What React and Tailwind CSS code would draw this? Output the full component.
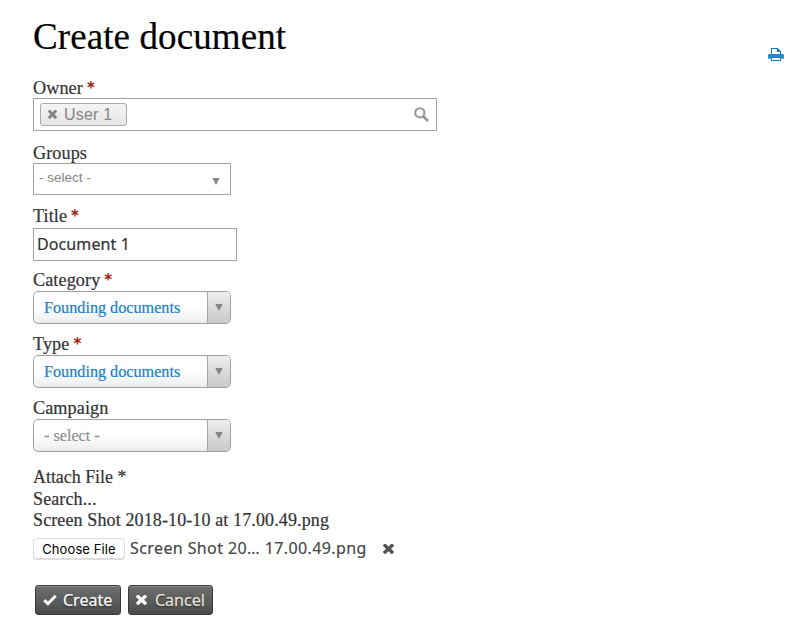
import React from "react";

const serif = "font-['Liberation_Serif',serif] [-webkit-text-stroke:0.2px]";

function Cross({ className }) {
  return (
    <svg viewBox="302 406 1188 1148" className={className} fill="currentColor" preserveAspectRatio="none">
      <path d="M1490 1322q0 40-28 68l-136 136q-28 28-68 28t-68-28l-294-294-294 294q-28 28-68 28t-68-28l-136-136q-28-28-28-68t28-68l294-294-294-294q-28-28-28-68t28-68l136-136q28-28 68-28t68 28l294 294 294-294q28-28 68-28t68 28l136 136q28 28 28 68t-28 68l-294 294 294 294q28 28 28 68z" />
    </svg>
  );
}

function Check({ className }) {
  return (
    <svg viewBox="0 0 14 12" className={className} fill="none">
      <path d="M1.3 6.2l3.6 3.5L12.7 1.8" stroke="currentColor" strokeWidth="3" />
    </svg>
  );
}

function Search({ className }) {
  return (
    <svg viewBox="0 0 16 16" className={className} fill="none" stroke="currentColor">
      <circle cx="6.2" cy="6.2" r="4.9" strokeWidth="2.3" />
      <path d="M9.8 9.8l5.2 5.2" strokeWidth="3" />
    </svg>
  );
}

function Printer({ className }) {
  return (
    <svg viewBox="0 0 16 16" className={className} fill="none">
      <path d="M3.5 7V1.5h6l3 3V7" stroke="#1c80c0" strokeWidth="1.1" />
      <path d="M9 1v4h4z" fill="#1c80c0" />
      <path d="M1.4 7h13.2q1.4 0 1.4 1.4v2.4q0 1-1 1H1q-1 0-1-1V8.4Q0 7 1.4 7z" fill="#2b8ac6" />
      <path d="M3.5 10.5h9v3h-9z" fill="#fff" stroke="#1c80c0" strokeWidth="1.1" />
    </svg>
  );
}

function Label({ children, required }) {
  return (
    <div className={`${serif} flex h-5 items-center whitespace-pre text-[18.2px] leading-5 tracking-[0.08px] text-[#333]`}>
      {children}
      {required && (
        <span className="ml-1 font-['DejaVu_Sans',sans-serif] text-[15px] font-bold text-[#a01a10] [-webkit-text-stroke:0]">*</span>
      )}
    </div>
  );
}

function Arrow() {
  return (
    <svg viewBox="0 0 8 7" className="h-[7px] w-2">
      <path d="M.3 0h7.4L4 7z" fill="#858585" />
    </svg>
  );
}

function Dropdown({ value, muted }) {
  return (
    <div className="flex h-[33px] w-[198px] overflow-hidden rounded-[5px] border border-[#a0a0a0] bg-linear-to-b from-white from-50% to-[#ececec]">
      <div className={`${serif} flex-1 pl-2.5 text-[16.2px] leading-[32px] ${muted ? "text-[#8f8f8f]" : "text-[#1b80c4]"}`}>
        {value}
      </div>
      <div className="flex w-[23px] items-center justify-center border-l border-[#a8a8a8] bg-linear-to-b from-[#eee] to-[#c8c8c8]">
        <Arrow />
      </div>
    </div>
  );
}

function ActionButton({ children, className }) {
  return (
    <button
      className={`flex h-[30px] items-center rounded-[3px] border border-[#3c3c3c] bg-linear-to-b from-[#6e6e6e] to-[#4b4d4c] pl-[7px] font-['Noto_Sans',sans-serif] text-[16px] shadow-[inset_0_1px_0_#8c8c8c] [-webkit-text-stroke:0.25px] [text-shadow:0_1px_1px_#111] ${className}`}
    >
      {children}
    </button>
  );
}

export default function App() {
  return (
    <main className="flex h-[640px] w-[812px] items-start justify-between bg-white pl-[33px] pr-[28px]">
      <form className="flex flex-col items-start">
        <h1 className={`${serif} mt-4 h-[62px] whitespace-nowrap text-[37px] leading-[42px] tracking-[0.1px] text-black`}>
          Create document
        </h1>

        <Label required>Owner</Label>
        <div className="flex h-[33px] w-[404px] items-center justify-between border-[1.5px] border-[#a2a2a2] pl-1.5 pr-[7px]">
          <div className="flex h-[23px] w-[87px] items-center rounded-[3px] border border-[#aaa] bg-linear-to-b from-[#f4f4f4] to-[#e6e6e6] pl-[7px] text-[#858585]">
            <Cross className="size-[9px]" />
            <span className="ml-[7px] font-['Liberation_Sans',sans-serif] text-[16px] leading-5 tracking-[0.2px]">User 1</span>
          </div>
          <Search className="size-[15px] text-[#999]" />
        </div>

        <div className="h-3" />
        <Label>Groups</Label>
        <div className="flex h-8 w-[198px] items-center justify-between border-[1.5px] border-[#a2a2a2] pl-[5px] pr-[10px]">
          <span className="pb-[2px] font-['Liberation_Sans',sans-serif] text-[13.5px] leading-5 text-[#858585]">- select -</span>
          <span className="pt-1">
            <Arrow />
          </span>
        </div>

        <div className="h-[11px]" />
        <Label required>Title</Label>
        <div className="mt-[2px] h-[33px] w-[204px] border-[1.5px] border-[#a2a2a2] pl-[3px] font-['Noto_Sans',sans-serif] text-[16px] leading-[30px] tracking-[0.1px] text-[#333] [-webkit-text-stroke:0.2px]">
          Document 1
        </div>

        <div className="h-[9px]" />
        <Label required>Category</Label>
        <div className="h-px" />
        <Dropdown value="Founding documents" />

        <div className="h-[10px]" />
        <Label required>Type</Label>
        <div className="h-px" />
        <Dropdown value="Founding documents" />

        <div className="h-[10px]" />
        <Label>Campaign</Label>
        <div className="h-px" />
        <Dropdown value="- select -" muted />

        <div className={`${serif} mt-[15px] whitespace-nowrap text-[18px] leading-[21.7px] tracking-[0.12px] text-[#333]`}>
          <div className="tracking-[-0.05px]">Attach File *</div>
          <div>Search...</div>
          <div>Screen Shot 2018-10-10 at 17.00.49.png</div>
        </div>

        <div className="mt-[6px] flex h-[21px] items-center">
          <span className="h-[21px] w-[92px] rounded-[4px] border border-[#ddd] bg-white text-center font-['Inter',sans-serif] text-[13px] leading-[20px] tracking-[0.1px] text-black shadow-[0_1px_0_#ddd]">
            Choose File
          </span>
          <span className="ml-[5px] w-[237px] whitespace-nowrap pb-[2px] font-['Noto_Sans',sans-serif] text-[16px] leading-5 tracking-[0.4px] text-[#444] [-webkit-text-stroke:0.15px]">
            Screen Shot 20… 17.00.49.png
          </span>
          <Cross className="ml-4 h-[10px] w-[11px] text-[#555]" />
        </div>

        <div className="ml-[2px] mt-[26px] flex gap-[7px]">
          <ActionButton className="w-[86px] text-white">
            <Check className="h-3 w-[14px]" />
            <span className="ml-[6px]">Create</span>
          </ActionButton>
          <ActionButton className="w-[85px] text-[#e4e4d8]">
            <Cross className="h-[10px] w-[11px] text-white" />
            <span className="ml-[8px]">Cancel</span>
          </ActionButton>
        </div>
      </form>
      <Printer className="mt-[47px] size-4" />
    </main>
  );
}
